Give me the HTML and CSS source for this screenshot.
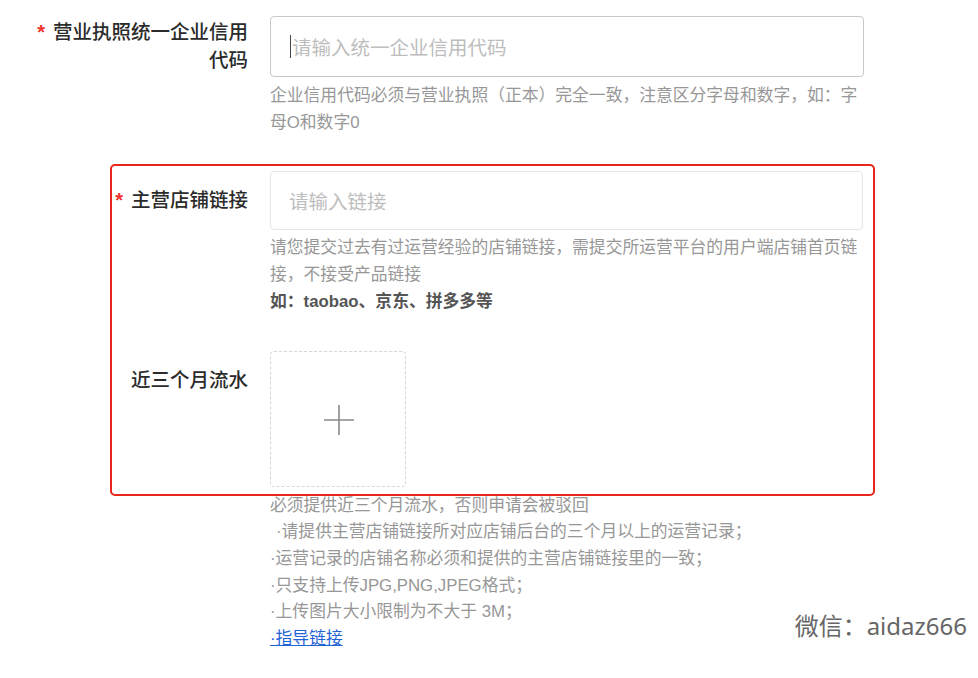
FILE: index.html
```html
<!DOCTYPE html>
<html>
<head>
    <meta charset="UTF-8">
    <title>店铺资质填写</title>
    <link rel="stylesheet" href="styles.css">
</head>
<body>
	<div class="form">
		<div class="row row-first">
			<label class="label label-wide"><span class="req">*</span>营业执照统一企业信用代码</label>
			<div class="field">
				<div class="input input-focus"><span class="caret"></span><span class="ph">请输入统一企业信用代码</span></div>
				<p class="help">企业信用代码必须与营业执照（正本）完全一致，注意区分字母和数字，如：字母O和数字0</p>
			</div>
		</div>

		<div class="highlight">
			<div class="row row-link">
				<label class="label label-inner"><span class="req">*</span>主营店铺链接</label>
				<div class="field">
					<div class="input input-link"><span class="ph">请输入链接</span></div>
					<p class="help help-link">请您提交过去有过运营经验的店铺链接，需提交所运营平台的用户端店铺首页链接，不接受产品链接</p>
					<p class="help help-strong">如：taobao、京东、拼多多等</p>
				</div>
			</div>
			<div class="row">
				<label class="label label-inner">近三个月流水</label>
				<div class="field">
					<div class="upload">
						<svg width="30" height="30" viewBox="0 0 30 30">
							<path d="M15 0V30M0 15H30" stroke="#8a8a8a" stroke-width="1.6" fill="none"/>
						</svg>
					</div>
				</div>
			</div>
		</div>

		<div class="notes">
			<p>必须提供近三个月流水，否则申请会被驳回</p>
			<p class="indent">·请提供主营店铺链接所对应店铺后台的三个月以上的运营记录；</p>
			<p>·运营记录的店铺名称必须和提供的主营店铺链接里的一致；</p>
			<p>·只支持上传JPG,PNG,JPEG格式；</p>
			<p>·上传图片大小限制为不大于 3M；</p>
			<p><a href="#guide">·指导链接</a></p>
		</div>
	</div>

	<div class="watermark">微信：aidaz666</div>
</body>
</html>
```

FILE: styles.css
```css
body,p{
	margin: 0;
}
body{
	position: relative;
	height: 678px;
	font-family: "Liberation Sans", "Noto Sans CJK SC", sans-serif;
	background: #fff;
	color: #333;
	overflow: hidden;
}
.form{
	padding-top: 16px;
}
.row{
	display: flex;
	align-items: flex-start;
}
.row-first{
	margin-bottom: 28px;
}
.row-link{
	margin-bottom: 35px;
}
.label{
	flex: none;
	box-sizing: border-box;
	padding-top: 15px;
	font-size: 19.5px;
	font-weight: 500;
	line-height: 28px;
	text-align: right;
	color: #2b2b2b;
}
.label-wide{
	width: 248px;
	padding-left: 28px;
	padding-top: 2px;
}
.label-inner{
	width: 136px;
}
.req{
	margin-right: 8px;
	font-size: 20px;
	font-weight: bold;
	color: #f0302a;
}
.field{
	width: 594px;
	margin-left: 22px;
}
.input{
	display: flex;
	align-items: center;
	box-sizing: border-box;
	height: 61px;
	padding-left: 19px;
	border: 1px solid #c9c9c9;
	border-radius: 4px;
	font-size: 19.5px;
}
.input-link{
	height: 59px;
	padding-left: 18px;
	border-color: #e6e6e6;
	margin-right: 1px;
}
.caret{
	display: inline-block;
	width: 1px;
	height: 23px;
	margin-right: 1px;
	background: #444;
}
.ph{
	color: #bdbdbd;
}
.help{
	margin-top: 6px;
	font-size: 16.8px;
	line-height: 26.7px;
	color: #979797;
}
.help-link{
	margin-top: 5px;
}
.help-strong{
	margin-top: 0;
	font-weight: bold;
	color: #555;
}
.highlight{
	box-sizing: border-box;
	width: 765px;
	margin-left: 110px;
	padding: 5px 0 7px;
	border: 2px solid #e8261c;
	border-radius: 5px;
}
.upload{
	display: flex;
	align-items: center;
	justify-content: center;
	box-sizing: border-box;
	width: 136px;
	height: 136px;
	padding: 2px 0 0 2px;
	border: 1px dashed #d6d6d6;
	border-radius: 4px;
}
.notes{
	margin: -3px 0 0 270px;
	font-size: 16.8px;
	line-height: 26.7px;
	color: #979797;
}
.notes .indent{
	padding-left: 6px;
}
.notes a{
	color: #1f63d6;
	text-decoration: underline;
}
.watermark{
	position: absolute;
	right: 11px;
	top: 609px;
	font-family: "Noto Sans", "Noto Sans CJK SC", sans-serif;
	font-size: 24px;
	line-height: 34px;
	color: #666;
}
```
